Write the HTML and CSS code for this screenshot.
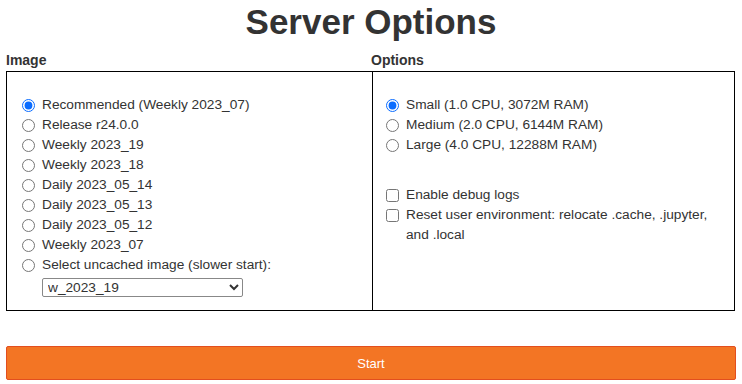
FILE: index.html
```html
<!DOCTYPE html>
<html lang="en">
<head>
    <meta charset="UTF-8">
    <title>Server Options</title>
    <link rel="stylesheet" href="styles.css">
</head>
<body>
    <h1>Server Options</h1>
    <form class="options">
        <div class="heads">
            <div class="head">Image</div>
            <div class="head">Options</div>
        </div>
        <div class="box">
            <div class="cell cell-left">
                <label class="row"><input type="radio" name="image" checked> Recommended (Weekly 2023_07)</label>
                <label class="row"><input type="radio" name="image"> Release r24.0.0</label>
                <label class="row"><input type="radio" name="image"> Weekly 2023_19</label>
                <label class="row"><input type="radio" name="image"> Weekly 2023_18</label>
                <label class="row"><input type="radio" name="image"> Daily 2023_05_14</label>
                <label class="row"><input type="radio" name="image"> Daily 2023_05_13</label>
                <label class="row"><input type="radio" name="image"> Daily 2023_05_12</label>
                <label class="row"><input type="radio" name="image"> Weekly 2023_07</label>
                <label class="row"><input type="radio" name="image"> Select uncached image (slower start):</label>
                <select class="uncached">
                    <option>w_2023_19</option>
                </select>
            </div>
            <div class="cell cell-right">
                <label class="row"><input type="radio" name="size" checked> Small (1.0 CPU, 3072M RAM)</label>
                <label class="row"><input type="radio" name="size"> Medium (2.0 CPU, 6144M RAM)</label>
                <label class="row"><input type="radio" name="size"> Large (4.0 CPU, 12288M RAM)</label>
                <div class="spacer"></div>
                <label class="row"><input type="checkbox"> Enable debug logs</label>
                <label class="row wrap"><input type="checkbox"> <span>Reset user environment: relocate .cache, .jupyter, and .local</span></label>
            </div>
        </div>
        <button type="button" class="start">Start</button>
    </form>
</body>
</html>
```

FILE: styles.css
```css
body {
    font-family: "Liberation Sans", Arial, sans-serif;
    color: #333;
    margin: 0;
    padding: 0 6px;
    font-size: 13.7px;
}
h1 {
    text-align: center;
    font-size: 35px;
    font-weight: bold;
    margin: 0;
    padding-top: 2px;
    height: 48px;
    line-height: 40px;
}
.heads {
    display: grid;
    grid-template-columns: 365px 1fr;
    height: 21px;
}
.head {
    font-weight: bold;
    font-size: 14px;
    line-height: 21px;
}
.box {
    display: grid;
    grid-template-columns: 365px 1fr;
    border: 1px solid #000;
    height: 240px;
    box-sizing: border-box;
    width: 729px;
}
.cell {
    display: flex;
    flex-direction: column;
    padding-top: 23px;
}
.cell-left {
    padding-left: 15px;
}
.cell-right {
    border-left: 1px solid #000;
    padding-left: 13px;
}
.row {
    display: flex;
    align-items: flex-start;
    line-height: 20px;
    gap: 7px;
}
.row input {
    margin: 4px 0 0 0;
    width: 13px;
    height: 13px;
    flex: none;
    accent-color: #0a6cff;
}
.wrap span {
    width: 318px;
}
.spacer {
    height: 30px;
}
.uncached {
    margin: 3px 0 0 20px;
    width: 201px;
    height: 19px;
    font-family: "Liberation Sans", Arial, sans-serif;
    font-size: 13.7px;
    color: #333;
    border: 1px solid #888;
    border-radius: 2px;
    background: #fff;
    padding: 0 1px;
}
.start {
    display: block;
    width: 730px;
    height: 34px;
    margin-top: 35px;
    background: #f37524;
    border: 1px solid #e34e1f;
    border-radius: 2px;
    color: #fff;
    font-family: "Liberation Sans", Arial, sans-serif;
    font-size: 13px;
}
```
